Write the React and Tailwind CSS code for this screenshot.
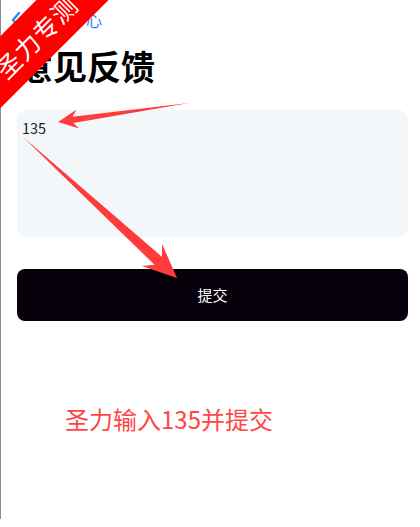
import React from "react";

function arrowPoints(T, P, L, W, w) {
  const dx = P[0] - T[0];
  const dy = P[1] - T[1];
  const len = Math.hypot(dx, dy);
  const d = [dx / len, dy / len];
  const n = [-d[1], d[0]];
  const B = [P[0] - d[0] * L, P[1] - d[1] * L];
  const B2 = [P[0] - d[0] * (L * 0.75), P[1] - d[1] * (L * 0.75)];
  const pts = [
    T,
    [B2[0] + n[0] * w, B2[1] + n[1] * w],
    [B[0] + n[0] * W, B[1] + n[1] * W],
    P,
    [B[0] - n[0] * W, B[1] - n[1] * W],
    [B2[0] - n[0] * w, B2[1] - n[1] * w],
  ];
  return pts.map((p) => p[0].toFixed(1) + "," + p[1].toFixed(1)).join(" ");
}

export default function App() {
  const font = { fontFamily: '"Noto Sans CJK SC", "Noto Sans", sans-serif' };
  return (
    <div className="relative w-[420px] h-[527px] bg-white overflow-hidden" style={font}>
      <div className="h-[519px] border-l border-[#8c8c8c] flex flex-col">
        <div className="flex items-center h-[40px] pl-[9px] text-[#2b87f7]">
          <svg width="12" height="18" viewBox="0 0 12 18" className="shrink-0">
            <path d="M9 2 L3 9 L9 16" fill="none" stroke="#2b87f7" strokeWidth="2.4" strokeLinecap="round" strokeLinejoin="round" />
          </svg>
          <span className="ml-[16px] text-[16px] leading-none">个人中心</span>
        </div>
        <h1 className="ml-[18px] mt-[6px] text-[34px] font-bold leading-[40px] text-black">意见反馈</h1>
        <div className="ml-[16px] mr-[12px] mt-[24px] h-[127px] rounded-[9px] bg-[#f4f7fa] px-[5px] pt-[8px] text-[14.5px] leading-[20px] text-[#222]">
          135
        </div>
        <button className="ml-[16px] mr-[12px] mt-[32px] h-[52px] rounded-[8px] bg-[#07000a] text-white text-[15px]">
          提交
        </button>
        <div className="mt-[83px] pl-[64px] text-[24px] leading-[30px] text-[#ff4646]">
          圣力输入135并提交
        </div>
      </div>

      <svg className="absolute inset-0 pointer-events-none" width="420" height="527">
        <polygon points={arrowPoints([189, 103], [58, 122], 20, 9.5, 3.2)} fill="#ff3b3b" />
        <polygon points={arrowPoints([23, 137], [177, 278], 34, 15, 5.5)} fill="#ff3b3b" />
      </svg>

      <div className="absolute left-[-64px] top-[11px] w-[200px] h-[51px] -rotate-45 bg-[#ff0000] flex items-center justify-center">
        <span className="text-white text-[25px] leading-none tracking-[1px]">圣力专测</span>
      </div>
    </div>
  );
}
